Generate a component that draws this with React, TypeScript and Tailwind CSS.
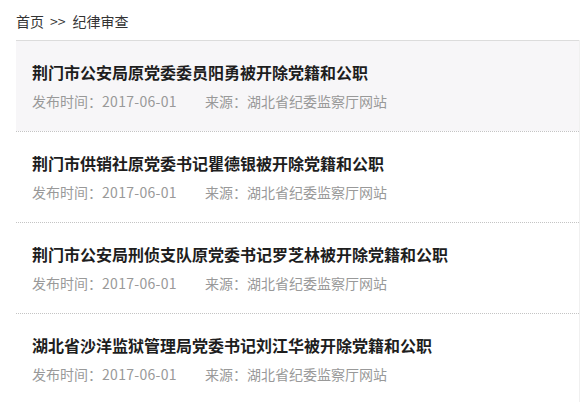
import React from 'react'

const items = [
  '荆门市公安局原党委委员阳勇被开除党籍和公职',
  '荆门市供销社原党委书记瞿德银被开除党籍和公职',
  '荆门市公安局刑侦支队原党委书记罗芝林被开除党籍和公职',
  '湖北省沙洋监狱管理局党委书记刘江华被开除党籍和公职',
]

const Item = ({ title, first }: { title: string; first: boolean }) => {
  return (
    <div
      className={
        first
          ? 'border-t border-[#dcdcdc] bg-[#f7f6f8] px-4 pt-[19px] pb-5'
          : 'border-t border-dotted border-[#c4c4c4] bg-white px-4 pt-[19px] pb-5'
      }
    >
      <div className="text-[16px] leading-6 font-bold text-[#1e1e1e]">{title}</div>
      <div className="mt-[7px] flex text-[14px] leading-5 text-[#999]">
        <span>
          发布时间：<span className="tracking-[0.3px]">2017-06-01</span>
        </span>
        <span className="ml-7">来源：湖北省纪委监察厅网站</span>
      </div>
    </div>
  )
}

const App = () => {
  return (
    <div
      className="h-[402px] w-[588px] overflow-hidden bg-white"
      style={{ fontFamily: '"Noto Sans CJK SC", "Noto Sans", sans-serif' }}
    >
      <div className="flex px-4 pt-[11px] pb-[9px] text-[14px] leading-5 text-[#333]">
        <span>首页</span>
        <span className="ml-1.5">&gt;&gt;</span>
        <span className="ml-[7px]">纪律审查</span>
      </div>
      <div className="mr-2 ml-4 border-r border-[#f0f0f0]">
        {items.map((t, i) => (
          <Item key={i} title={t} first={i === 0} />
        ))}
      </div>
    </div>
  )
}

export default App
